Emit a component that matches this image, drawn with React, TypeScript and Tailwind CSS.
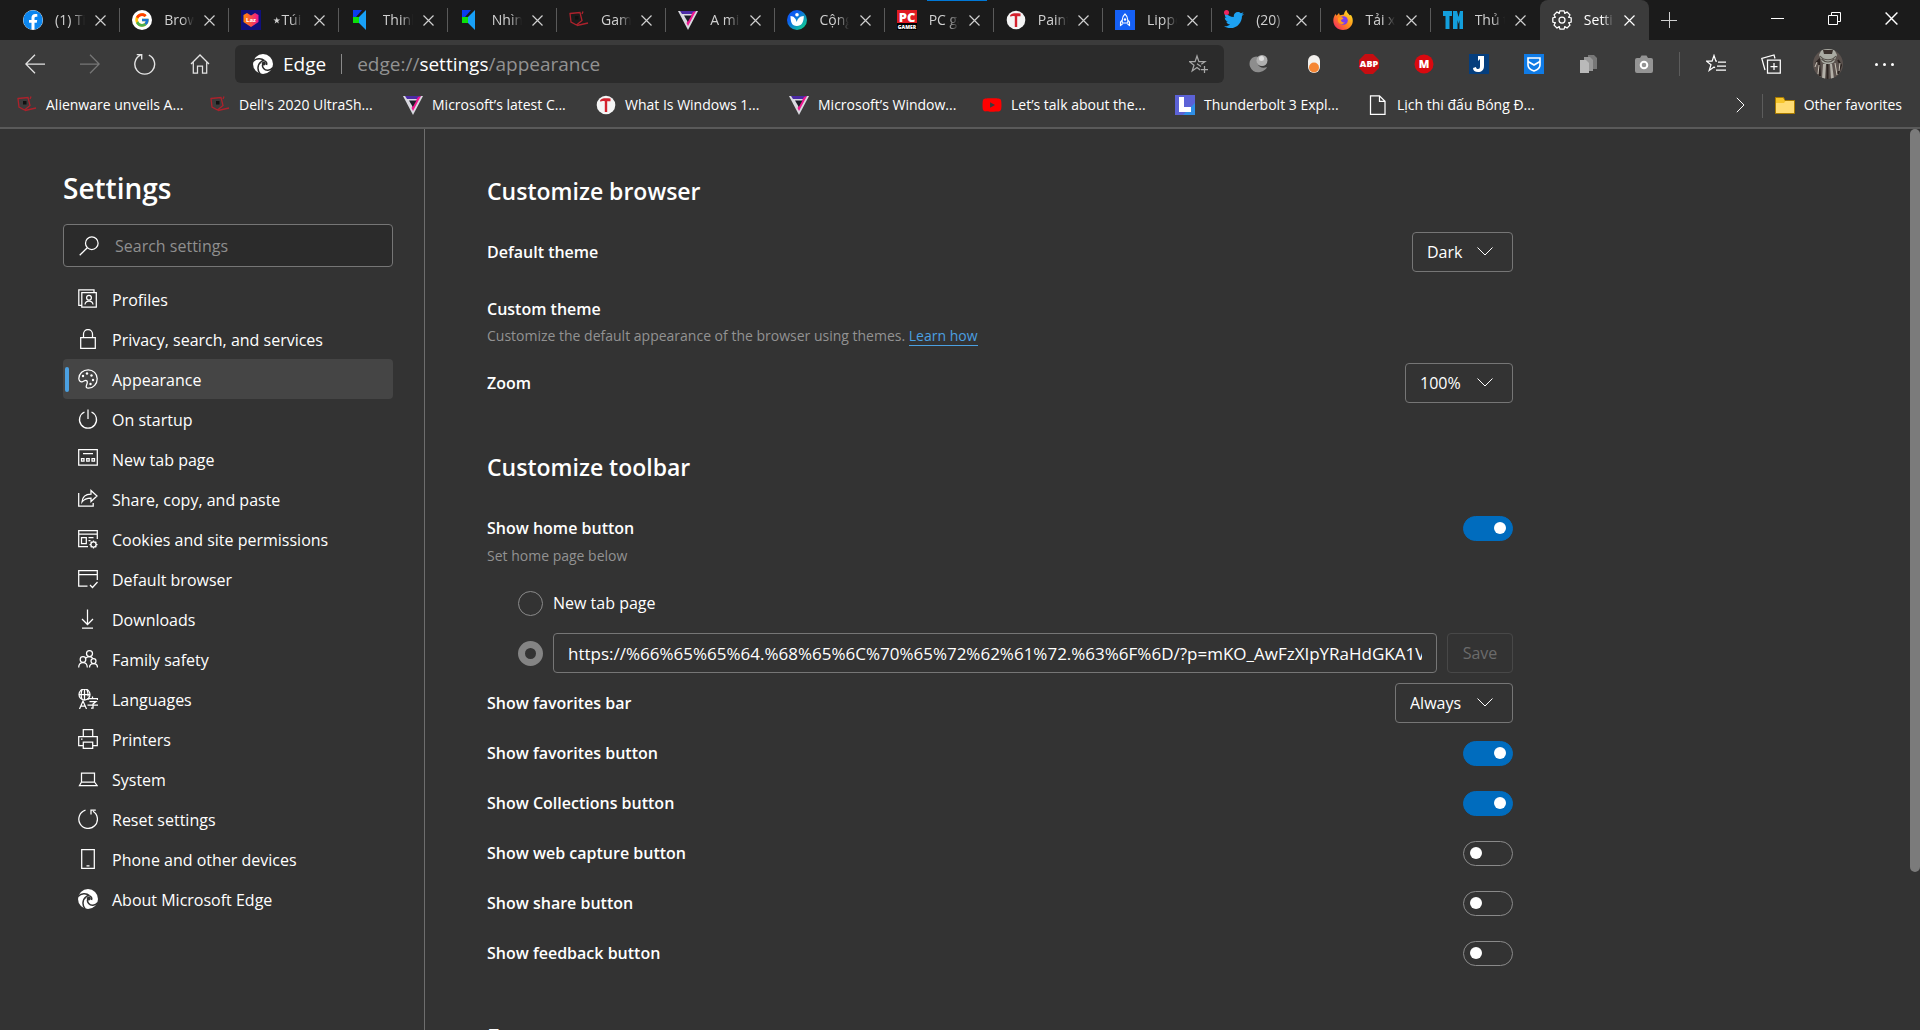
import { useState } from "react";
import type { ReactNode } from "react";
import { FaFacebook, FaTwitter, FaYoutube } from "react-icons/fa";
import { FcGoogle } from "react-icons/fc";

type IconProps = { children: ReactNode; className?: string };

// Thin line icon on a 20px grid
const Line = ({ children, className = "size-5" }: IconProps) => (
  <svg
    viewBox="0 0 20 20"
    fill="none"
    stroke="currentColor"
    strokeWidth="1.25"
    className={`shrink-0 ${className}`}
    aria-hidden="true"
  >
    {children}
  </svg>
);

const Art = ({ children, className = "size-5" }: IconProps) => (
  <svg viewBox="0 0 20 20" className={`shrink-0 ${className}`} aria-hidden="true">
    {children}
  </svg>
);

const EdgeLogo = ({ cut }: { cut: string }) => (
  <Art>
    <circle cx="10" cy="10" r="10" fill="#fff" />
    <g fill="none" stroke={cut} strokeWidth="1.5">
      <path d="M0 7.5C3 4.2 8.5 3.8 11.2 6.6" />
      <path d="M11.2 6.6c2.2 1 3 2.600 2.300 4.400" />
      <path d="M7.200 20C4 16.500 4.300 10.500 8 7.800c1-.8 2.100-1.200 3.200-1.200" />
      <path d="M20 13.500c-3 3.500-7.200 3.600-9.300 1-1.500-1.900-1.300-4.300 0-5.500" />
    </g>
    <circle cx="10.800" cy="9.600" r="2" fill={cut} />
  </Art>
);

const Laz = () => (
  <Art>
    <defs>
      <linearGradient id="laz" x1="0" x2="1">
        <stop offset="0" stopColor="#ff8a00" />
        <stop offset="1" stopColor="#f0148c" />
      </linearGradient>
    </defs>
    <rect width="20" height="20" fill="#10107c" />
    <path d="M10 17 2.500 12V5L6 3l4 2.500L14 3l3.500 2v7z" fill="url(#laz)" />
    <text x="10" y="12" fontSize="6" fontWeight="700" fill="#fff" textAnchor="middle" fontFamily="Open Sans, sans-serif">
      Laz
    </text>
  </Art>
);

const Speaker = () => (
  <Art>
    <path d="M2 0h9L5 7H2z" fill="#0a3cf0" />
    <path d="M15 0v20L8 13V7z" fill="#18a0f8" />
    <path d="M2 7h6v6H2z" fill="#0be00b" />
  </Art>
);

const RedSketch = () => (
  <Art>
    <path d="M1 3.500 11 2.500l2 8-5.500 4.500L2 12z" fill="none" stroke="#ac222c" strokeWidth="1.300" />
    <path d="M13 4l1-2.500M8 15.500l11-2.500" fill="none" stroke="#ac222c" strokeWidth="1.300" />
    <rect x="6" y="6" width="3.500" height="3.500" fill="#111" />
  </Art>
);

const Triangle = () => (
  <Art>
    <path d="M0 1h20l-10 19z" fill="#d9d9e0" />
    <path d="M2 1h16l-2.500 3H4z" fill="#4b2aa5" />
    <path d="M18 1 10 16l-1.500-3L15 2z" fill="#f01890" />
    <path d="M6 5.500h7.500L9.800 12z" fill="#1c1c28" />
  </Art>
);

const Leaf = () => (
  <Art>
    <defs>
      <linearGradient id="leaf" x1="0" y1="0" x2="1" y2="1">
        <stop offset="0.300" stopColor="#0c5cf0" />
        <stop offset="0.900" stopColor="#10d090" />
      </linearGradient>
    </defs>
    <circle cx="10" cy="10" r="10" fill="url(#leaf)" />
    <circle cx="10" cy="4.800" r="1.800" fill="#fff" />
    <path d="M3.500 6c3.500 0 5.500 3 6.300 6 .5-3 3-6 7-6 0 6-2 10-7 10S3.500 12 3.500 6z" fill="#fff" />
  </Art>
);

const PcGamer = () => (
  <Art>
    <rect width="20" height="13" fill="#e01b22" />
    <rect y="13" width="20" height="7" fill="#000" />
    <text x="10" y="11.500" fontSize="13" fontWeight="800" fill="#fff" textAnchor="middle" fontFamily="Open Sans, sans-serif">
      PC
    </text>
    <text x="10" y="18.500" fontSize="5" fontWeight="800" fill="#fff" textAnchor="middle" fontFamily="Open Sans, sans-serif">
      GAMER
    </text>
  </Art>
);

const Hammer = () => (
  <Art>
    <circle cx="10" cy="10" r="9.300" fill="#f4f4f4" />
    <path d="M4 5.500C5.500 3.300 8 3 14.500 3.500v2.700h-3.300V17H8.800V6.200C7 5.800 5.500 5.800 4.500 6.800z" fill="#d3212d" />
  </Art>
);

const Rocket = () => (
  <Art>
    <rect width="20" height="20" fill="#1560f5" />
    <path
      d="M10 4c2 1.800 2.800 3.500 2.800 6v3H7.200v-3C7.200 7.500 8 5.800 10 4zM7.200 10 5.500 12v3.500l2-1.500M12.800 10l1.700 2v3.500l-2-1.500"
      fill="none"
      stroke="#fff"
      strokeWidth="1.100"
    />
    <circle cx="10" cy="9.500" r="1.200" fill="#fff" />
  </Art>
);

const Twitter = () => (
  <span className="relative size-5 shrink-0">
    <FaTwitter className="size-5 text-[#1da1f2]" />
    <span className="absolute left-0 top-0 size-[5px] rounded-full bg-[#f0245e]" />
  </span>
);

const Firefox = () => (
  <Art>
    <defs>
      <linearGradient id="fox" x1="1" y1="0" x2="0" y2="1">
        <stop offset="0.100" stopColor="#ffe226" />
        <stop offset="0.500" stopColor="#ff8a1c" />
        <stop offset="1" stopColor="#f0186c" />
      </linearGradient>
    </defs>
    <path
      d="M13.500 0c.2 2.600 2 3.500 3.200 5.200L18 5c1.500 2.500 2 4.500 1.700 7-.7 4.700-4.700 8-9.700 8-5.500 0-9.700-4-9.700-9.500C.3 8 1.200 5.500 2.800 4l.7 1.800L6 3l.8 2.200 4.200-.7c.2-2 1-3.500 2.500-4.500z"
      fill="url(#fox)"
    />
    <circle cx="10.500" cy="10.500" r="4.300" fill="#7a3df0" />
    <path d="M5 8c2-1.500 4-1 5.500.5L8 10c0 2 2 3 4 2.300-2 2.700-6 2.200-7-1z" fill="#ff9a1c" />
  </Art>
);

const Tm = () => (
  <Art>
    <path d="M0 1h9v5H6.500v13h-4V6H0zM10 1h4l1.500 6L17 1h3v18h-3.500V10l-1 4-1-4v9H10z" fill="#139fdc" />
  </Art>
);

const gearTeeth = Array.from({ length: 8 }, (_, i) => i * 45);

const Gear = () => (
  <Line>
    {gearTeeth.map((a) => (
      <path key={a} d="M7 3.700 8 .8h4l1 2.900" transform={`rotate(${a} 10 10)`} />
    ))}
    <circle cx="10" cy="10" r="3" />
  </Line>
);

const Close = ({ className = "size-[11px]" }: { className?: string }) => (
  <svg viewBox="0 0 11 11" fill="none" stroke="currentColor" strokeWidth="1.200" className={className} aria-hidden="true">
    <path d="M.5.500l10 10M10.500.500l-10 10" />
  </svg>
);

const tabs = [
  { title: "(1) Tin", icon: <FaFacebook className="size-5 shrink-0 rounded-full bg-white text-[#0c86ee]" /> },
  {
    title: "Brows",
    icon: (
      <span className="flex size-5 shrink-0 items-center justify-center rounded-full bg-white">
        <FcGoogle className="size-4" />
      </span>
    ),
  },
  { title: "⭑Túi", icon: <Laz /> },
  { title: "Thinh", icon: <Speaker /> },
  { title: "Nhìn", icon: <Speaker /> },
  { title: "Gam", icon: <RedSketch /> },
  { title: "A mi", icon: <Triangle /> },
  { title: "Cộng", icon: <Leaf /> },
  { title: "PC ga", icon: <PcGamer />, loading: true },
  { title: "Paint", icon: <Hammer /> },
  { title: "Lippo", icon: <Rocket /> },
  { title: "(20)", icon: <Twitter /> },
  { title: "Tải xu", icon: <Firefox /> },
  { title: "Thủ t", icon: <Tm /> },
  { title: "Settin", icon: <Gear />, active: true },
];

const TabStrip = () => (
  <header className="flex h-10 shrink-0 bg-[#1b1b1b] pl-[11px] text-[#d0d0d0]">
    <div className="flex max-w-[1638px] flex-1">
      {tabs.map((tab, i) => (
        <div
          key={i}
          className={`relative flex min-w-0 flex-1 items-center pl-3 pr-3.5 ${tab.active ? "rounded-t-lg bg-[#3b3b3b] text-white" : ""}`}
        >
          {tab.loading ? <span className="absolute left-[42px] top-0 h-px w-[60px] bg-[#0078d7]" /> : null}
          <button className="flex min-w-0 flex-1 items-center gap-3">
            {tab.icon}
            <span className="w-[30px] overflow-hidden whitespace-nowrap text-left text-sm [mask-image:linear-gradient(to_right,#000_60%,transparent)]">
              {tab.title}
            </span>
          </button>
          <button aria-label="Close tab">
            <Close />
          </button>
          {!tab.active && i !== tabs.length - 2 ? (
            <span className="absolute right-0 top-2 h-6 w-px bg-[#5a5a5a]" />
          ) : null}
        </div>
      ))}
    </div>
    <button aria-label="New tab" className="flex w-10 items-center justify-center">
      <svg viewBox="0 0 16 16" className="size-4" stroke="currentColor" aria-hidden="true">
        <path d="M0 8.500h16M8.500 0v16" />
      </svg>
    </button>
    <div className="ml-auto flex text-white">
      <button aria-label="Minimize" className="flex h-9 w-[57px] items-center justify-center">
        <span className="h-px w-[13px] bg-white" />
      </button>
      <button aria-label="Restore" className="flex h-9 w-[57px] items-center justify-center">
        <svg viewBox="0 0 13 13" className="size-[13px]" fill="none" stroke="currentColor" aria-hidden="true">
          <path d="M.5 3.500h9v9h-9zM3.500 3.500v-3h9v9h-3" />
        </svg>
      </button>
      <button aria-label="Close window" className="flex h-9 w-[57px] items-center justify-center">
        <Close className="size-[13px]" />
      </button>
    </div>
  </header>
);

const extensions = [
  {
    name: "Sphere",
    icon: (
      <Art>
        <path d="M5 3C1 4.500-.5 9 1.200 13c1.800 4.500 6 6 10 5 3.500-1 6-2.500 6.800-5-4 1.500-8 .5-9-2.500-.8-2.500-1.500-5 .5-7.500C8 2.300 6.500 2.300 5 3z" fill="#8d8d8d" />
        <circle cx="13" cy="6.500" r="5.500" fill="#b0b0b0" />
        <circle cx="12.500" cy="4.500" r="2.500" fill="#dedede" />
      </Art>
    ),
  },
  {
    name: "Toggle",
    icon: (
      <Art>
        <rect x="4" y="1" width="12" height="18" rx="6" fill="#f3f1ee" />
        <circle cx="10" cy="13.500" r="5" fill="#f58634" />
      </Art>
    ),
  },
  {
    name: "Adblock",
    icon: (
      <Art>
        <path d="M6 0h8l6 6v8l-6 6H6l-6-6V6z" fill="#c70d11" />
        <text x="10" y="13.300" fontSize="9" fontWeight="800" fill="#fff" textAnchor="middle" fontFamily="Open Sans, sans-serif">
          ABP
        </text>
      </Art>
    ),
  },
  {
    name: "Mega",
    icon: (
      <Art>
        <circle cx="10" cy="10" r="9.500" fill="#d9090f" />
        <text x="10" y="14" fontSize="11" fontWeight="800" fill="#fff" textAnchor="middle" fontFamily="Open Sans, sans-serif">
          M
        </text>
      </Art>
    ),
  },
  {
    name: "Downloader",
    icon: (
      <Art>
        <rect width="20" height="20" fill="#053e7d" />
        <path d="M9 2h6v10c0 4-2.500 6-6 6-3 0-5-1.500-5-4l3-1c0 1.500 1 2 2 2 1.300 0 2-.8 2-2.500V5L9 7z" fill="#fff" />
      </Art>
    ),
  },
  {
    name: "Shield",
    icon: (
      <Art>
        <rect width="20" height="20" fill="#0f7be6" />
        <path d="M4 4h12v7c0 3-2.500 4.800-6 6-3.500-1.200-6-3-6-6z" fill="none" stroke="#fff" strokeWidth="1.600" />
        <path d="m4 7.500 6 3.500 6-3.500" fill="none" stroke="#fff" strokeWidth="1.800" />
      </Art>
    ),
  },
  {
    name: "Copy",
    icon: (
      <Art>
        <path d="M9 1h6l3 3v11H9z" fill="#777" />
        <path d="M5 3h6l3 3v11H5z" fill="#979797" />
        <path d="M1 6h6l3 3v10H1z" fill="#b9b9b9" />
      </Art>
    ),
  },
  {
    name: "Screenshot",
    icon: (
      <Art>
        <path d="M3 4h3l1.500-2.500h5L14 4h3a2 2 0 0 1 2 2v11a2 2 0 0 1-2 2H3a2 2 0 0 1-2-2V6a2 2 0 0 1 2-2z" fill="#949494" />
        <circle cx="10" cy="11" r="3.300" fill="none" stroke="#fff" strokeWidth="2" />
      </Art>
    ),
  },
];

const Avatar = () => (
  <svg viewBox="0 0 30 30" className="size-[30px] rounded-full" aria-hidden="true">
    <rect width="30" height="30" fill="#5b524e" />
    <path d="M9 0h12l3 6-3 7c-4 3-8 3-12 0L6 6z" fill="#a9aaa2" />
    <path d="M10 1h10l-1 4h-8z" fill="#3a302c" />
    <path d="M7 7c4 5 12 5 16 0M8.500 10c4 4 9 4 13 0" fill="none" stroke="#55504a" strokeWidth="1.200" />
    <path d="M10 15h3l-1 15H9zM17 15h2l2 15h-3z" fill="#b3b0a8" />
    <path d="M3 14l3-3 1 16M25 11l3 5-3 9M14.500 15v15" fill="none" stroke="#2c2421" strokeWidth="2" />
    <path d="M2 18l2-5M26 22l1-8M5 25l1-9M22 14l2 12" stroke="#c9c3b8" />
  </svg>
);

const toolButton = "flex h-10 w-[55px] items-center justify-center";

const Toolbar = () => (
  <div className="flex h-12 shrink-0 items-center bg-[#3b3b3b] pl-[7px] pr-2 text-[#e4e4e4]">
    <button aria-label="Back" className={toolButton}>
      <Line>
        <path d="M20 10H.8M10 .8.800 10l9.200 9.200" />
      </Line>
    </button>
    <button aria-label="Forward" className={`${toolButton} text-[#777777]`}>
      <Line>
        <path d="M0 10h19.200M10 .8l9.200 9.200-9.200 9.200" />
      </Line>
    </button>
    <button aria-label="Refresh" className={toolButton}>
      <Line className="size-[22px]">
        <path d="M13.500 2A9 9 0 1 1 6 2M2.500 1.500H7V6" />
      </Line>
    </button>
    <button aria-label="Home" className={toolButton}>
      <Line>
        <path d="m1 10 9-9 9 9M3.300 8v11h4.200v-7h5v7h4.200V8" />
      </Line>
    </button>
    <div className="ml-2 flex h-[38px] flex-1 items-center rounded-md bg-[#2b2b2b] pl-[18px] pr-[15px]">
      <EdgeLogo cut="#2b2b2b" />
      <span className="ml-2.5 text-[19px] text-white">Edge</span>
      <span className="mx-[15px] h-5 w-px bg-[#8a8a8a]" />
      <div className="flex-1 text-[19px] text-[#929292]">
        edge://<span className="text-white">settings</span>/appearance
      </div>
      <button aria-label="Add this page to favorites" className="text-[#a8a8a8]">
        <Line>
          <path d="M12 12.500 8 9.800M11.200 16 8 13.500l-4.800 3.500L5 11.200.500 7.700h5.600L8 2l1.900 5.700h6l-3.600 2.600M15.500 12v7M12 15.500h7" />
        </Line>
      </button>
    </div>
    <div className="ml-[7px] flex">
      {extensions.map((ext) => (
        <button key={ext.name} aria-label={ext.name} className={toolButton}>
          {ext.icon}
        </button>
      ))}
    </div>
    <span className="ml-2 h-6 w-px bg-[#5c5c5c]" />
    <div className="ml-2 flex text-white">
      <button aria-label="Favorites" className={toolButton}>
        <Line>
          <path d="M11 7.200H9.900L8 1.500 6.100 7.200H.5L5 10.700l-1.800 5.800L8 13l1 .8M12 8h8M11 12h9M10 16h10" />
        </Line>
      </button>
      <button aria-label="Collections" className={toolButton}>
        <Line>
          <path d="M6.500 6h12.800v13H6.500zM13 9v7M9.500 12.500h7M4 16 .800 4.500 13 1l1 3.500" />
        </Line>
      </button>
      <button aria-label="Profile" className="flex h-10 w-[59px] items-center justify-center">
        <Avatar />
      </button>
      <button aria-label="More" className={`${toolButton} gap-[5px]`}>
        <span className="size-[3px] rounded-full bg-white" />
        <span className="size-[3px] rounded-full bg-white" />
        <span className="size-[3px] rounded-full bg-white" />
      </button>
    </div>
  </div>
);

const bookmarks = [
  { title: "Alienware unveils A...", icon: <RedSketch /> },
  { title: "Dell's 2020 UltraSh...", icon: <RedSketch /> },
  { title: "Microsoft’s latest C...", icon: <Triangle /> },
  { title: "What Is Windows 1...", icon: <Hammer /> },
  { title: "Microsoft’s Window...", icon: <Triangle /> },
  { title: "Let’s talk about the...", icon: <FaYoutube className="size-5 shrink-0 text-[#ff0000]" /> },
  {
    title: "Thunderbolt 3 Expl...",
    icon: (
      <Art>
        <rect width="20" height="20" fill="#5c62d6" />
        <path d="M20 8v12H8z" fill="#2f8fe6" />
        <path d="M4 2h5v10h7v5H4z" fill="#fff" />
      </Art>
    ),
  },
  {
    title: "Lịch thi đấu Bóng Đ...",
    icon: (
      <Line>
        <path d="M2.500.800h9l5.500 5.500v13H2.500zM11.500.800v5.500H17" />
      </Line>
    ),
  },
];

const FavoritesBar = () => (
  <nav className="flex h-[41px] shrink-0 border-b-2 border-[#5a5a5a] bg-[#3b3b3b] pb-1.5 text-sm text-white">
    <div className="flex flex-1 pl-[17px]">
      {bookmarks.map((b) => (
        <a key={b.title} href="#" className="flex w-[193px] items-center gap-[9px] whitespace-nowrap">
          {b.icon}
          {b.title}
        </a>
      ))}
    </div>
    <button aria-label="More favorites" className="flex w-11 items-center justify-center">
      <Line className="size-4">
        <path d="m6 1 9 9-9 9" />
      </Line>
    </button>
    <span className="mt-1.5 h-6 w-px bg-[#5c5c5c]" />
    <button className="ml-3 mr-[18px] flex items-center gap-[9px]">
      <Art>
        <path d="M.5 2.500h8l1.500 3h9.500v13H.500z" fill="#f6c52b" stroke="#a87a00" />
        <path d="M1 8h8l1.500-2H19v12H1z" fill="#ffdc73" />
      </Art>
      Other favorites
    </button>
  </nav>
);

const navItems = [
  {
    name: "Profiles",
    icon: (
      <Line>
        <path d="M3.800 3.500h14.500v14.700H3.800zM16 3V.800H.800v15.500h2.500M7 15.500c.3-2.300 1.800-3.300 4-3.300s3.700 1 4 3.300" />
        <circle cx="11" cy="8.800" r="2.400" />
      </Line>
    ),
  },
  {
    name: "Privacy, search, and services",
    icon: (
      <Line>
        <path d="M2.700 8.700h14.600v10.600H2.700zM5.500 8.700V5a4.500 4.500 0 0 1 9 0v3.700" />
      </Line>
    ),
  },
  {
    name: "Appearance",
    icon: (
      <Line>
        <path d="M.8 9.500C1 4.500 5 .8 10.200.8c5 0 9 3.900 9 9 0 5-3.800 9.300-8.700 9.400-2.200 0-2.800-1.300-2-3 1-2.200 1.300-3.500.3-4.500-1.300-1.200-2.600.3-4.300 1-1.900.7-3.600-.8-3.700-3.200z" />
        <g fill="currentColor" stroke="none">
          <circle cx="5" cy="7" r="1.200" />
          <circle cx="9" cy="4.500" r="1.200" />
          <circle cx="13.500" cy="6.500" r="1.200" />
          <circle cx="15" cy="11" r="1.200" />
          <circle cx="12.500" cy="15" r="1.200" />
        </g>
      </Line>
    ),
  },
  {
    name: "On startup",
    icon: (
      <Line>
        <path d="M10 .5V10M6.500 3a8.500 8.500 0 1 0 7 0" />
      </Line>
    ),
  },
  {
    name: "New tab page",
    icon: (
      <Line>
        <path d="M.700.700h18.600v15.500H.700zM5 4.500h10M3.500 9.500h2.500V12H3.500zM8.700 9.500h2.500V12H8.700zM14 9.500h2.500V12H14z" />
      </Line>
    ),
  },
  {
    name: "Share, copy, and paste",
    icon: (
      <Line>
        <path d="M.700 4v13h14.500v-3M4 13c.3-5 3.500-8 9-8V1.500L19 7l-6 5.500V9c-4 0-7 1-9 4z" />
      </Line>
    ),
  },
  {
    name: "Cookies and site permissions",
    icon: (
      <Line>
        <path d="M10 17.500H.700v-16h18.600V10M.700 5h18.600M3.500 8.500h4.800v6H3.500zM10.500 8.500h5M10.500 11.500h2" />
        <circle cx="15.500" cy="15.500" r="2.600" />
        <path d="M15.500 11.500v1.500M15.500 18v1.500M11.500 15.500h1.500M18 15.500h1.500M12.700 12.700l1 1M17.300 17.300l1 1M18.300 12.700l-1 1M13.700 17.300l-1 1" />
      </Line>
    ),
  },
  {
    name: "Default browser",
    icon: (
      <Line>
        <path d="M9.500 17H.700V1.500h18.600V11M.700 5.500h18.600M12 16l2.500 2.500L19.500 13" />
      </Line>
    ),
  },
  {
    name: "Downloads",
    icon: (
      <Line>
        <path d="M9.500.5v15M4 10l5.500 5.500L15 10M4 19.200h11" />
      </Line>
    ),
  },
  {
    name: "Family safety",
    icon: (
      <Line>
        <circle cx="11.500" cy="4.500" r="3" />
        <circle cx="5" cy="10.500" r="2.800" />
        <circle cx="15.500" cy="12" r="2.500" />
        <path d="M.700 18.500c0-3 1.800-5 4.300-5s4.300 2 4.300 5M11.500 18.500c0-2.500 1.500-4 4-4s4 1.500 4 4M8 9c1-1.200 2-1.500 3.500-1.500S14 8 15 9.500" />
      </Line>
    ),
  },
  {
    name: "Languages",
    icon: (
      <Line>
        <circle cx="6.500" cy="5.500" r="5.500" />
        <path d="M1 5.500h11M6.500 0v11M4 .8C2.800 4 2.800 7 4 10.200M9 .8c1.200 3.200 1.200 5 1 6.500M1.500 20l3.500-8 3.500 8M2.800 17h4.400M10 11V9.500h9.500V11M14.500 7.500v2M11.500 12.500H18l-3 2.500v4h-2M9.500 16h10.500" />
      </Line>
    ),
  },
  {
    name: "Printers",
    icon: (
      <Line>
        <path d="M5.300 7.500V.7h9.400v6.800M5 16.500H.700v-9h18.600v9H15M5.300 13h9.400v6.300H5.300zM3 10h1.500" />
      </Line>
    ),
  },
  {
    name: "System",
    icon: (
      <Line>
        <path d="M3.500 4h13v9h-13zM3.500 13l-2 3.500h17.500L16.500 13" />
      </Line>
    ),
  },
  {
    name: "Reset settings",
    icon: (
      <Line>
        <path d="M7.500 1.200a9.300 9.300 0 1 0 7.500 1M13 5.500V1h4.800" />
      </Line>
    ),
  },
  {
    name: "Phone and other devices",
    icon: (
      <Line>
        <path d="M3.700.700h12.600v18.600H3.700zM8.500 16.800h3" />
      </Line>
    ),
  },
  { name: "About Microsoft Edge", icon: <EdgeLogo cut="#333333" /> },
];

const Sidebar = () => (
  <aside className="w-[425px] shrink-0 border-r border-[#6e6e6e] pl-[63px] pr-[31px] pt-[41px]">
    <h1 className="text-[28px] font-semibold leading-9">Settings</h1>
    <div className="mt-[18px] flex h-[43px] items-center gap-4 rounded-sm border border-[#767676] bg-[#2b2b2b] pl-[15px]">
      <Line>
        <circle cx="12.800" cy="7.200" r="6.300" />
        <path d="M8.300 11.700.700 19.300" />
      </Line>
      <input
        type="text"
        aria-label="Search settings"
        placeholder="Search settings"
        className="min-w-0 flex-1 bg-transparent outline-none placeholder:text-[#8f8f8f]"
      />
    </div>
    <nav className="mt-3">
      {navItems.map((item) => (
        <a
          key={item.name}
          href="#"
          className={`relative flex h-10 items-center gap-3.5 rounded-sm pl-[15px] ${item.name === "Appearance" ? "bg-[#454545]" : ""}`}
        >
          {item.name === "Appearance" ? (
            <span className="absolute left-0.5 h-[25px] w-1 rounded-sm bg-[#4ba0e1]" />
          ) : null}
          {item.icon}
          <span className="pt-0.5">{item.name}</span>
        </a>
      ))}
    </nav>
  </aside>
);

type DropdownProps = { id: string; label: string; options: string[]; width: string };

const Dropdown = ({ id, label, options, width }: DropdownProps) => (
  <div className="flex h-[50px] items-center justify-between">
    <label htmlFor={id} className="font-semibold">
      {label}
    </label>
    <div className={`relative ${width}`}>
      <select
        id={id}
        className="h-10 w-full appearance-none rounded-sm border border-[#767676] bg-[#333333] pl-3.5 text-white outline-none"
      >
        {options.map((o) => (
          <option key={o}>{o}</option>
        ))}
      </select>
      <svg
        viewBox="0 0 16 9"
        fill="none"
        stroke="currentColor"
        className="pointer-events-none absolute right-5 top-[15px] h-[9px] w-4"
        aria-hidden="true"
      >
        <path d="m.5.500 7.500 7.500L15.500.500" />
      </svg>
    </div>
  </div>
);

type ToggleProps = { id: string; label: string; on?: boolean };

const Toggle = ({ id, label, on = false }: ToggleProps) => {
  const [checked, setChecked] = useState(on);

  return (
    <div className="flex h-[50px] items-center justify-between">
      <label htmlFor={id} className="font-semibold">
        {label}
      </label>
      <input
        id={id}
        type="checkbox"
        role="switch"
        checked={checked}
        onChange={() => setChecked(!checked)}
        className="flex h-[25px] w-[50px] appearance-none items-center rounded-full border border-[#8a8a8a] px-1.5 before:size-3 before:rounded-full before:bg-white checked:justify-end checked:border-[#006cbe] checked:bg-[#006cbe]"
      />
    </div>
  );
};

const Main = () => (
  <main className="min-w-0 flex-1 overflow-hidden pl-[62px] pr-5 pt-[46px]">
    <div className="max-w-[1026px]">
      <section>
        <h2 className="mb-5 text-[23px] font-semibold leading-8">Customize browser</h2>
        <Dropdown id="theme" label="Default theme" options={["Dark"]} width="w-[101px]" />
        <div className="pb-3 pt-5">
          <h3 className="font-semibold">Custom theme</h3>
          <p className="mt-[5px] text-sm text-[#929292]">
            Customize the default appearance of the browser using themes.{" "}
            <a href="#" className="border-b border-[#4ba0e1] text-[#4ba0e1]">
              Learn how
            </a>
          </p>
        </div>
        <Dropdown id="zoom" label="Zoom" options={["100%"]} width="w-[108px]" />
      </section>

      <section className="mt-[43px]">
        <h2 className="mb-5 text-[23px] font-semibold leading-8">Customize toolbar</h2>
        <Toggle id="home" label="Show home button" on />
        <p className="-mt-[7px] pb-3 text-sm text-[#929292]">Set home page below</p>
        <div className="flex h-[50px] items-center gap-2.5 pl-[31px]">
          <input
            id="home-newtab"
            type="radio"
            name="home-page"
            className="size-[25px] appearance-none rounded-full border border-[#8a8a8a]"
          />
          <label htmlFor="home-newtab">New tab page</label>
        </div>
        <div className="flex h-[50px] items-center gap-2.5 pl-[31px]">
          <input
            type="radio"
            name="home-page"
            aria-label="Custom address"
            defaultChecked
            className="size-[25px] shrink-0 appearance-none rounded-full border-[7px] border-[#848484]"
          />
          <input
            type="text"
            aria-label="Home page address"
            defaultValue="https://%66%65%65%64.%68%65%6C%70%65%72%62%61%72.%63%6F%6D/?p=mKO_AwFzXIpYRaHdGKA1VtQ"
            className="h-10 min-w-0 flex-1 rounded-sm border border-[#767676] bg-[#333333] px-3.5 text-[17px] outline-none"
          />
          <button disabled className="h-10 w-[66px] rounded-sm border border-[#484848] text-[#6b6b6b]">
            Save
          </button>
        </div>
        <Dropdown id="favbar" label="Show favorites bar" options={["Always"]} width="w-[118px]" />
        <Toggle id="favorites" label="Show favorites button" on />
        <Toggle id="collections" label="Show Collections button" on />
        <Toggle id="capture" label="Show web capture button" />
        <Toggle id="share" label="Show share button" />
        <Toggle id="feedback" label="Show feedback button" />
      </section>

      <section className="mt-[43px]">
        <h2 className="mb-5 text-[23px] font-semibold leading-8">Fonts</h2>
      </section>
    </div>
  </main>
);

const App = () => {
  return (
    <div className="flex h-screen flex-col overflow-hidden bg-[#333333] font-['Open_Sans',sans-serif] text-base text-white">
      <TabStrip />
      <Toolbar />
      <FavoritesBar />
      <div className="flex min-h-0 flex-1">
        <Sidebar />
        <Main />
        <div className="w-2.5 shrink-0">
          <div className="h-[82.5%] rounded-full bg-[#7b7b7b]" />
        </div>
      </div>
    </div>
  );
};

export default App;
